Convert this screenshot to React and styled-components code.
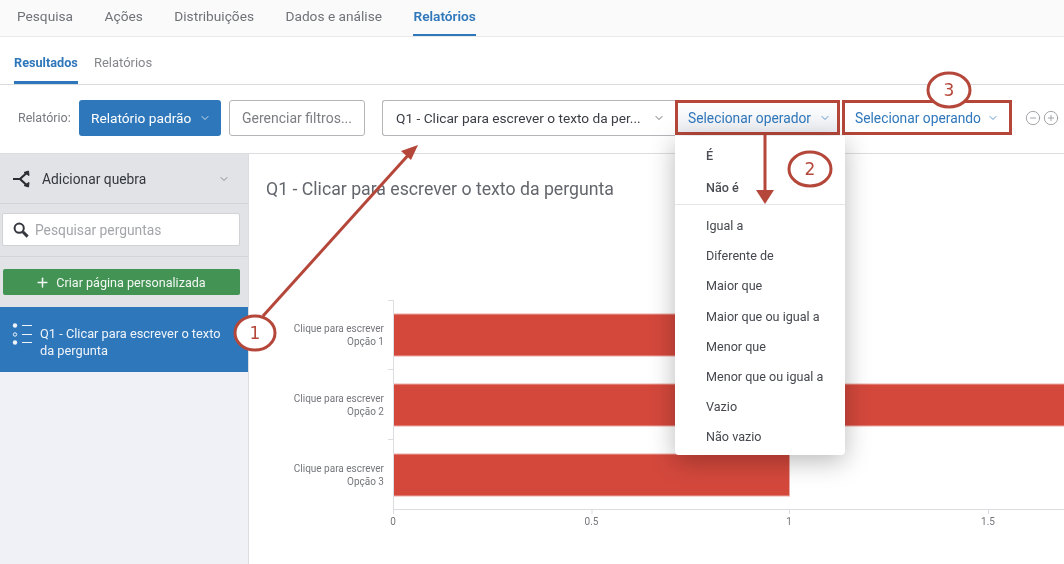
import React from "react";
import styled, { createGlobalStyle } from "styled-components";
import { ChevronDown, CircleMinus, CirclePlus, Plus } from "lucide-react";

const TABS = ["Pesquisa", "Ações", "Distribuições", "Dados e análise", "Relatórios"];
const OPERATORS = ["Igual a", "Diferente de", "Maior que", "Maior que ou igual a", "Menor que", "Menor que ou igual a", "Vazio", "Não vazio"];
const BARS = [
  { y: 314, w: 396, label: "Opção 1" },
  { y: 384, w: 671, label: "Opção 2" },
  { y: 454, w: 396, label: "Opção 3" },
];
const TICKS = [
  { x: 393, label: "0" },
  { x: 591.5, label: "0.5" },
  { x: 789, label: "1" },
  { x: 988, label: "1.5" },
];

const GlobalStyle = createGlobalStyle`
  html, body {
    margin: 0;
    padding: 0;
    background: #fff;
  }
  * {
    box-sizing: border-box;
  }
`;

const Page = styled.div`
  position: relative;
  width: 1064px;
  height: 564px;
  overflow: hidden;
  background: #fff;
  color: #525660;
  font-family: Roboto, "Liberation Sans", sans-serif;
  filter: blur(0.45px);
`;

const TopNav = styled.nav`
  display: flex;
  gap: 31.5px;
  height: 37px;
  padding-left: 17px;
  background: #fafafa;
  border-bottom: 1px solid #e9e9ea;
`;

const TopTab = styled.div`
  height: 36px;
  padding-top: 8px;
  font-size: 13.7px;
  font-weight: ${(p) => (p.$active ? 600 : 400)};
  color: ${(p) => (p.$active ? "#2f77bb" : "#6f7278")};
  border-bottom: ${(p) => (p.$active ? "2px solid #2f77bb" : "none")};
`;

const SubNav = styled.nav`
  display: flex;
  gap: 16px;
  height: 48px;
  padding-left: 14px;
  border-bottom: 1px solid #d9dadc;
`;

const SubTab = styled.div`
  height: 47px;
  padding-top: 18px;
  font-size: ${(p) => (p.$active ? 12.7 : 13)}px;
  font-weight: ${(p) => (p.$active ? 700 : 400)};
  color: ${(p) => (p.$active ? "#2f77bb" : "#85878c")};
  border-bottom: ${(p) => (p.$active ? "3px solid #2f77bb" : "none")};
`;

const Toolbar = styled.div`
  display: flex;
  align-items: center;
  height: 69px;
  padding: 0 0 3px 18px;
  border-bottom: 1px solid #dcdde0;
`;

const ToolLabel = styled.span`
  width: 61px;
  font-size: 12.5px;
  color: #777a80;
`;

const PrimaryButton = styled.button`
  display: flex;
  align-items: center;
  justify-content: space-between;
  width: 142px;
  height: 36px;
  padding: 0 10px 0 12px;
  border: none;
  border-radius: 3px;
  background: #2f77bb;
  color: #fff;
  font: 400 13.7px Roboto, sans-serif;
`;

const OutlineButton = styled.button`
  width: 136px;
  height: 36px;
  margin: 0 17px 0 8px;
  padding: 0;
  border: 1px solid #b4b5b8;
  border-radius: 3px;
  background: #fff;
  color: #7b7d82;
  font: 400 14px Roboto, sans-serif;
`;

const QuestionSelect = styled.div`
  display: flex;
  align-items: center;
  justify-content: space-between;
  width: 293px;
  height: 36px;
  padding: 0 10px 0 13px;
  border: 1px solid #b4b5b8;
  border-right: none;
  border-radius: 3px 0 0 3px;
  color: #3a3d44;
  font-size: 13.7px;
`;

const OperatorSelect = styled.div`
  display: flex;
  align-items: center;
  justify-content: space-between;
  width: ${(p) => p.$width}px;
  height: 35px;
  margin-right: ${(p) => p.$gap}px;
  padding: 0 ${(p) => p.$padRight}px 0 13px;
  outline: 3px solid #b5473a;
  outline-offset: -3px;
  background: ${(p) => (p.$open ? "linear-gradient(#fff, #eceef3)" : "#fff")};
  color: #2f77bb;
  font-size: 13.8px;
`;

const RoundIcons = styled.div`
  display: flex;
  gap: 2px;
  margin-left: 13px;
  color: #8d8f94;
`;

const Body = styled.div`
  display: flex;
  height: 410px;
`;

const Sidebar = styled.aside`
  display: flex;
  flex-direction: column;
  flex: 0 0 249px;
  background: #f0f1f6;
  border-right: 1px solid #dcdde0;
`;

const BreakRow = styled.div`
  display: flex;
  align-items: center;
  gap: 9px;
  height: 50px;
  padding: 0 18px 0 13px;
  background: #e1e3e6;
  border-bottom: 1px solid #d2d4d7;
  color: #34373d;
  font-size: 13.8px;
`;

const BreakText = styled.span`
  flex: 1;
`;

const SearchRow = styled.div`
  height: 53px;
  padding: 9px 8px 0 2px;
  background: #e1e3e6;
  border-bottom: 1px solid #d2d4d7;
`;

const SearchBox = styled.div`
  display: flex;
  align-items: center;
  gap: 6px;
  height: 33px;
  padding-left: 10px;
  background: #fff;
  border: 1px solid #d0d2d5;
  border-radius: 2px;
  color: #a3a5aa;
  font-size: 13.8px;
`;

const CreateRow = styled.div`
  height: 50px;
  padding: 12px 8px 0 3px;
  background: #e1e3e6;
`;

const CreateButton = styled.button`
  display: flex;
  align-items: center;
  justify-content: center;
  gap: 6px;
  width: 100%;
  height: 26px;
  padding: 0 2px 0 0;
  border: none;
  border-radius: 2px;
  background: #439454;
  color: #f2f7f3;
  font: 400 12.6px Roboto, sans-serif;
`;

const QuestionItem = styled.div`
  display: flex;
  gap: 7px;
  height: 65px;
  padding: 15px 24px 0 12px;
  background: #2f77bb;
  color: #eef4fa;
  font-size: 12.8px;
  line-height: 17px;
`;

const QuestionText = styled.span`
  margin-top: 3px;
`;

const Content = styled.main`
  flex: 1;
  padding: 25px 0 0 17px;
`;

const ChartTitle = styled.h2`
  margin: 0;
  font-size: 17.7px;
  font-weight: 400;
  line-height: 20px;
  color: #63666c;
`;

const Menu = styled.div`
  position: absolute;
  left: 675px;
  top: 136px;
  width: 170px;
  height: 319px;
  padding-top: 4px;
  background: #fff;
  border-radius: 0 0 4px 4px;
  box-shadow: 0 6px 26px rgba(0, 0, 0, 0.28);
`;

const MenuGroup = styled.div`
  padding: ${(p) => (p.$first ? "0 0 1px" : "6px 0 0")};
  border-bottom: ${(p) => (p.$first ? "1px solid #e4e5e7" : "none")};
`;

const MenuItem = styled.div`
  height: ${(p) => (p.$first ? 31.5 : 30.2)}px;
  padding-left: 31px;
  font-size: 12.6px;
  font-weight: ${(p) => (p.$first ? 500 : 400)};
  line-height: ${(p) => (p.$first ? 31.5 : 30.2)}px;
  color: ${(p) => (p.$first ? "#4a4d53" : "#45484e")};
`;

const Overlay = styled.svg`
  position: absolute;
  inset: 0;
  pointer-events: none;
`;

const ChartSvg = styled.svg`
  position: absolute;
  left: 0;
  top: 0;
  pointer-events: none;
`;

function BreakIcon() {
  return (
    <svg width="20" height="20" viewBox="0 0 20 20" fill="none" stroke="#2b2d33" strokeWidth="2.2">
      <path d="M0 10h7L13 4.5M7 10l6 5.5" />
      <path d="M11 3.5l4.5-1.5.5 4.5zM11 16.5l4.5 1.5.5-4.5z" fill="#2b2d33" strokeWidth="1" />
    </svg>
  );
}

function SearchIcon() {
  return (
    <svg width="16" height="16" viewBox="0 0 16 16" fill="none" stroke="#34373d" style={{ flexShrink: 0 }}>
      <circle cx="6.2" cy="6.2" r="4.6" strokeWidth="2" />
      <path d="M9.8 9.8l4.8 4.8" strokeWidth="3" />
    </svg>
  );
}

function ListIcon() {
  return (
    <svg width="21" height="26" viewBox="0 0 21 26" fill="none" stroke="#eef4fa" style={{ flexShrink: 0 }}>
      <circle cx="3" cy="3.5" r="2.2" fill="#eef4fa" stroke="none" />
      <circle cx="3" cy="12.5" r="1.7" strokeWidth="1" />
      <circle cx="3" cy="20.5" r="2.2" fill="#eef4fa" stroke="none" />
      <path d="M10 3.5h10M10 12.5h10M10 20.5h10" strokeWidth="1" />
    </svg>
  );
}

function Chart() {
  return (
    <ChartSvg width="1064" height="564" viewBox="0 0 1064 564" fontFamily="Roboto, sans-serif">
      {BARS.map((bar) => (
        <g key={bar.label}>
          <rect x="393.5" y={bar.y} width={bar.w} height="42" fill="#d4483c" stroke="#eba9a3" strokeWidth="1" />
          <text x="384" y={bar.y + 18} textAnchor="end" fontSize="10" fill="#74767b">Clique para escrever</text>
          <text x="384" y={bar.y + 31} textAnchor="end" fontSize="10" fill="#74767b">{bar.label}</text>
        </g>
      ))}
      <path d="M388 300.5h5.5V509.5H1064M388 369.5h5M388 439.5h5" fill="none" stroke="#dcdde0" />
      {TICKS.map((tick) => (
        <g key={tick.label}>
          <path d={`M${tick.x + 0.5} 509v5`} stroke="#dcdde0" />
          <text x={tick.x} y="525" textAnchor="middle" fontSize="10" fill="#74767b">{tick.label}</text>
        </g>
      ))}
    </ChartSvg>
  );
}

function Annotations() {
  const red = "#b5473a";
  return (
    <Overlay width="1064" height="564" viewBox="0 0 1064 564" fill="none">
      <path d="M263 316L411 152" stroke={red} strokeWidth="3" />
      <path d="M418 145l-17 6 10 9z" fill={red} />
      <path d="M765 135v60" stroke={red} strokeWidth="3" />
      <path d="M756 190h18l-9 14z" fill={red} />
      <ellipse cx="255" cy="333" rx="20" ry="17" fill="#fff" stroke={red} strokeWidth="3" />
      <ellipse cx="810" cy="169" rx="21" ry="17" fill="#fff" stroke={red} strokeWidth="3" />
      <ellipse cx="949" cy="90" rx="21" ry="17" fill="#fff" stroke={red} strokeWidth="3" />
      <g fill={red} fontFamily="'DejaVu Sans', sans-serif" fontSize="17" textAnchor="middle">
        <text x="255" y="339">1</text>
        <text x="810" y="175">2</text>
        <text x="949" y="96">3</text>
      </g>
    </Overlay>
  );
}

export default function App() {
  return (
    <Page>
      <GlobalStyle />
      <TopNav>
        {TABS.map((tab) => (
          <TopTab key={tab} $active={tab === "Relatórios"}>{tab}</TopTab>
        ))}
      </TopNav>
      <SubNav>
        <SubTab $active>Resultados</SubTab>
        <SubTab>Relatórios</SubTab>
      </SubNav>
      <Toolbar>
        <ToolLabel>Relatório:</ToolLabel>
        <PrimaryButton>
          Relatório padrão <ChevronDown size={12} strokeWidth={1.5} />
        </PrimaryButton>
        <OutlineButton>Gerenciar filtros...</OutlineButton>
        <QuestionSelect>
          Q1 - Clicar para escrever o texto da per...
          <ChevronDown size={12} strokeWidth={1.5} />
        </QuestionSelect>
        <OperatorSelect $width={165} $gap={2} $padRight={9} $open>
          Selecionar operador <ChevronDown size={12} strokeWidth={1.5} />
        </OperatorSelect>
        <OperatorSelect $width={170} $gap={0} $padRight={13}>
          Selecionar operando <ChevronDown size={12} strokeWidth={1.5} />
        </OperatorSelect>
        <RoundIcons>
          <CircleMinus size={16} strokeWidth={1.2} />
          <CirclePlus size={16} strokeWidth={1.2} />
        </RoundIcons>
      </Toolbar>
      <Body>
        <Sidebar>
          <BreakRow>
            <BreakIcon />
            <BreakText>Adicionar quebra</BreakText>
            <ChevronDown size={12} strokeWidth={1.5} color="#6a6d73" />
          </BreakRow>
          <SearchRow>
            <SearchBox>
              <SearchIcon />
              Pesquisar perguntas
            </SearchBox>
          </SearchRow>
          <CreateRow>
            <CreateButton>
              <Plus size={15} strokeWidth={2.4} /> Criar página personalizada
            </CreateButton>
          </CreateRow>
          <QuestionItem>
            <ListIcon />
            <QuestionText>Q1 - Clicar para escrever o texto da pergunta</QuestionText>
          </QuestionItem>
        </Sidebar>
        <Content>
          <ChartTitle>Q1 - Clicar para escrever o texto da pergunta</ChartTitle>
        </Content>
      </Body>
      <Chart />
      <Menu>
        <MenuGroup $first>
          <MenuItem $first>É</MenuItem>
          <MenuItem $first>Não é</MenuItem>
        </MenuGroup>
        <MenuGroup>
          {OPERATORS.map((op) => (
            <MenuItem key={op}>{op}</MenuItem>
          ))}
        </MenuGroup>
      </Menu>
      <Annotations />
    </Page>
  );
}
